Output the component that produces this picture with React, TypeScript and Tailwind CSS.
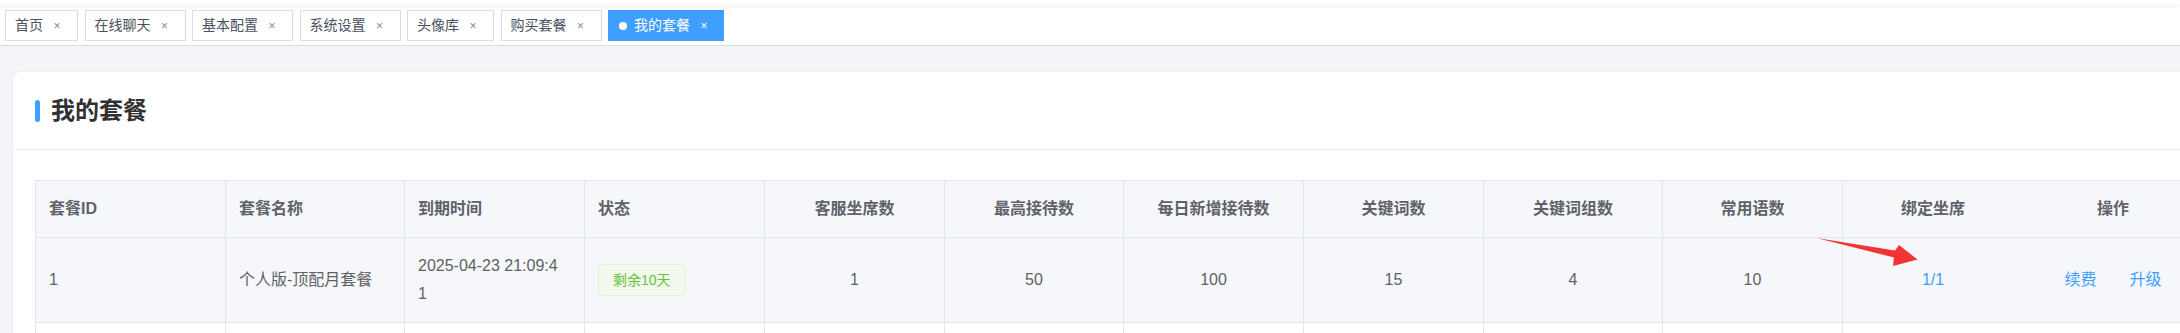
const tabs = ['首页', '在线聊天', '基本配置', '系统设置', '头像库', '购买套餐']

const cols = [
  { title: '套餐ID', w: 'w-[190px]', align: 'left' },
  { title: '套餐名称', w: 'w-[179px]', align: 'left' },
  { title: '到期时间', w: 'w-[180px]', align: 'left' },
  { title: '状态', w: 'w-[180px]', align: 'left' },
  { title: '客服坐席数', w: 'w-[180px]', align: 'center' },
  { title: '最高接待数', w: 'w-[179px]', align: 'center' },
  { title: '每日新增接待数', w: 'w-[180px]', align: 'center' },
  { title: '关键词数', w: 'w-[180px]', align: 'center' },
  { title: '关键词组数', w: 'w-[179px]', align: 'center' },
  { title: '常用语数', w: 'w-[180px]', align: 'center' },
  { title: '绑定坐席', w: 'w-[180px]', align: 'center', noBorder: true },
  { title: '操作', w: 'w-[180px]', align: 'center', noBorder: true },
]

function Cell({
  col,
  children,
  head,
}: {
  col: (typeof cols)[number]
  children?: React.ReactNode
  head?: boolean
}) {
  return (
    <div
      className={`${col.w} shrink-0 flex items-center px-[13px] border-b border-[#dfe6ec] ${
        col.noBorder ? '' : 'border-r'
      } ${col.align === 'center' ? 'justify-center text-center' : ''} ${
        head ? 'font-bold text-[#5f6268]' : 'text-[#606266]'
      }`}
    >
      <div className="break-all leading-[28px] min-w-0">{children}</div>
    </div>
  )
}

function Tab({ label, active }: { label: string; active?: boolean }) {
  if (active) {
    return (
      <div className="h-[31px] flex items-center border border-[#409eff] bg-[#409eff] text-white pl-[10px] pr-[11px] text-[14px]">
        <span className="w-2 h-2 rounded-full bg-white mr-[7px]" />
        <span>{label}</span>
        <span className="w-4 ml-[6px] text-center text-[12px] leading-none">×</span>
      </div>
    )
  }
  return (
    <div className="h-[31px] flex items-center border border-[#d8dce5] bg-white text-[#495060] pl-[9px] pr-[12px] text-[14px]">
      <span>{label}</span>
      <span className="w-4 ml-[6px] text-center text-[12px] leading-none text-[#8a8d94]">×</span>
    </div>
  )
}

export default function App() {
  return (
    <div className="relative w-[2180px] h-[333px] overflow-hidden bg-[#f4f5f9] font-['Liberation_Sans','Noto_Sans_CJK_SC',sans-serif]">
      <div className="relative z-10 h-[5px] bg-white shadow-[0_1px_4px_rgba(0,21,41,0.08)]" />
      <div className="h-[41px] bg-white border-b border-[#d8dce5] flex items-start gap-[6.5px] pl-[5px] pt-[5px]">
        {tabs.map((t) => (
          <Tab key={t} label={t} />
        ))}
        <Tab label="我的套餐" active />
      </div>

      <div className="ml-3 mt-[25px] w-[2200px] bg-white border border-[#ebeef5] rounded-lg">
        <div className="h-[78px] border-b border-[#ebeef5] flex items-center px-[22px]">
          <span className="w-[5px] h-[22px] rounded-full bg-[#409eff]" />
          <h1 className="ml-[11px] text-[24px] font-bold text-[#303133]">我的套餐</h1>
        </div>
        <div className="pt-[30px] pl-[22px]">
          <div className="border-l border-t border-[#dfe6ec] text-[16px]">
            <div className="flex h-[57px] bg-[#f5f7fa]">
              {cols.map((c) => (
                <Cell key={c.title} col={c} head>
                  {c.title}
                </Cell>
              ))}
            </div>
            <div className="flex h-[85px] bg-[#f5f7fa]">
              <Cell col={cols[0]}>1</Cell>
              <Cell col={cols[1]}>个人版-顶配月套餐</Cell>
              <Cell col={cols[2]}>
                2025-04-23 21:09:4
                <br />1
              </Cell>
              <Cell col={cols[3]}>
                <span className="inline-flex items-center h-8 px-[14px] rounded border border-[#e1f3d8] bg-[#f0f9eb] text-[#67c23a] text-[14px]">
                  剩余10天
                </span>
              </Cell>
              <Cell col={cols[4]}>1</Cell>
              <Cell col={cols[5]}>50</Cell>
              <Cell col={cols[6]}>100</Cell>
              <Cell col={cols[7]}>15</Cell>
              <Cell col={cols[8]}>4</Cell>
              <Cell col={cols[9]}>10</Cell>
              <Cell col={cols[10]}>
                <span className="text-[#409eff]">1/1</span>
              </Cell>
              <Cell col={cols[11]}>
                <span className="text-[#409eff]">续费</span>
                <span className="text-[#409eff] ml-[33px]">升级</span>
              </Cell>
            </div>
            <div className="flex h-[85px] bg-white">
              {cols.map((c) => (
                <Cell key={c.title} col={c} />
              ))}
            </div>
          </div>
        </div>
      </div>

      {/* red annotation arrow */}
      <svg className="absolute left-0 top-0 pointer-events-none" width="2180" height="333">
        <polygon
          points="1816.5,238 1895,250.5 1899,245 1917.5,259.5 1893,266 1894,257.5"
          fill="#f43434"
        />
      </svg>
    </div>
  )
}
